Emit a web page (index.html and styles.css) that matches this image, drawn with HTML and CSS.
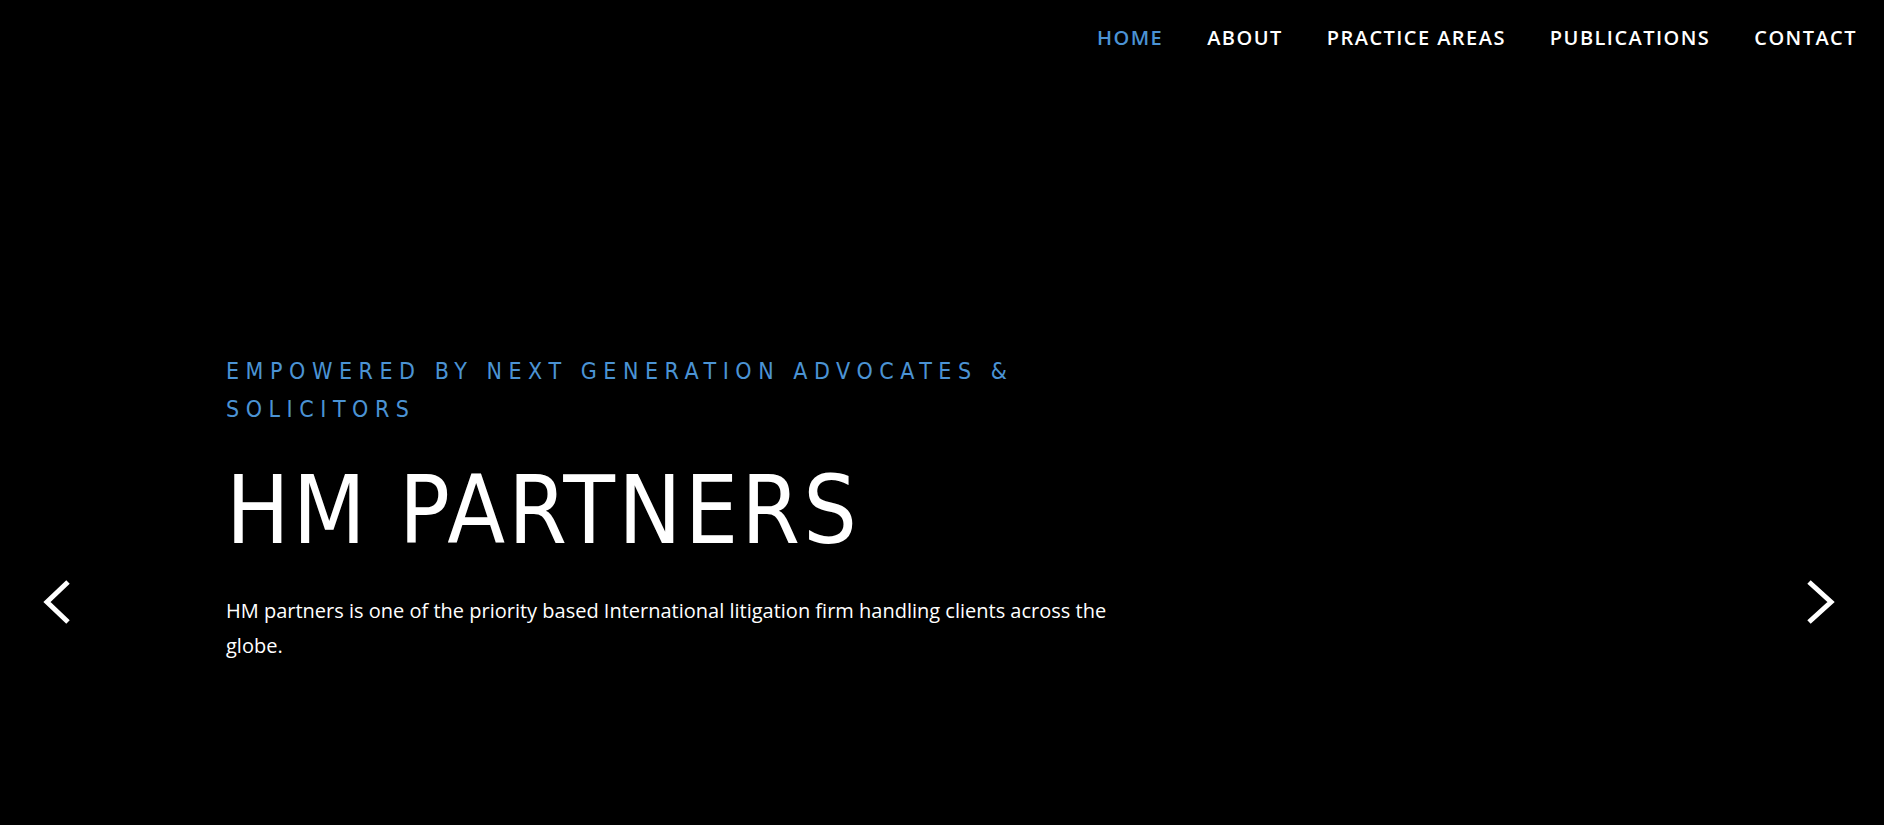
FILE: index.html
```
<!DOCTYPE html>
<html lang="en">
<head>
<meta charset="utf-8">
<title>HM Partners</title>
<link rel="stylesheet" href="styles.css">
</head>
<body>
<div class="page">
  <header class="topbar">
    <nav class="nav">
      <a class="nav-link active" href="#">HOME</a>
      <a class="nav-link" href="#">ABOUT</a>
      <a class="nav-link" href="#">PRACTICE AREAS</a>
      <a class="nav-link" href="#">PUBLICATIONS</a>
      <a class="nav-link" href="#">CONTACT</a>
    </nav>
  </header>
  <section class="hero">
    <div class="hero-content">
      <p class="tagline">EMPOWERED BY NEXT GENERATION ADVOCATES &amp; SOLICITORS</p>
      <h1 class="headline">HM PARTNERS</h1>
      <p class="lead">HM partners is one of the priority based International litigation firm handling clients across the globe.</p>
    </div>
    <a class="slide-arrow prev" href="#" aria-label="Previous">
      <svg width="30" height="48" viewBox="0 0 30 48"><polyline points="27,4 6,24 27,44" fill="none" stroke="#fff" stroke-width="5"/></svg>
    </a>
    <a class="slide-arrow next" href="#" aria-label="Next">
      <svg width="30" height="48" viewBox="0 0 30 48"><polyline points="4,4 26,24 4,44" fill="none" stroke="#fff" stroke-width="5"/></svg>
    </a>
  </section>
</div>
</body>
</html>
```
FILE: styles.css
```
html, body {
  margin: 0;
  padding: 0;
  background: #000;
}
.page {
  position: relative;
  height: 825px;
  overflow: hidden;
  background: #000;
}
.topbar {
  display: flex;
  justify-content: flex-end;
  padding: 26px 27px 0 0;
}
.nav {
  display: flex;
  gap: 44px;
}
.nav-link {
  font-family: "Open Sans", sans-serif;
  font-weight: 600;
  font-size: 20px;
  line-height: 24px;
  letter-spacing: 1.45px;
  color: #fff;
  text-decoration: none;
}
.nav-link.active {
  color: #4b93d4;
}
.hero {
  padding-left: 226px;
}
.hero-content {
  width: 900px;
  padding-top: 302px;
}
.tagline {
  margin: 0;
  font-family: "DejaVu Sans Condensed", "DejaVu Sans", sans-serif;
  font-stretch: condensed;
  font-size: 23px;
  line-height: 38px;
  letter-spacing: 6.55px;
  color: #4b93d4;
}
.headline {
  margin: 31px 0 0;
  font-family: "DejaVu Sans Condensed", "DejaVu Sans", sans-serif;
  font-stretch: condensed;
  font-weight: 400;
  font-size: 94px;
  line-height: 103px;
  letter-spacing: 3.2px;
  color: #fff;
}
.lead {
  margin: 31px 0 0;
  font-family: "Open Sans", sans-serif;
  font-size: 20px;
  line-height: 35px;
  color: #fff;
}
.slide-arrow {
  position: absolute;
  top: 578px;
  display: block;
  width: 30px;
  height: 48px;
}
.slide-arrow svg {
  display: block;
}
.slide-arrow.prev {
  left: 41px;
}
.slide-arrow.next {
  right: 49px;
}
```
